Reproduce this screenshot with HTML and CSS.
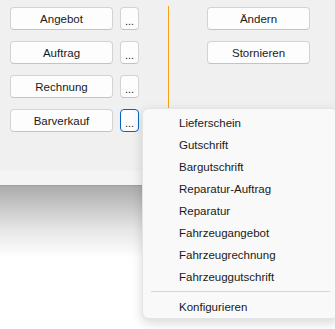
FILE: index.html
```html
<!DOCTYPE html>
<html lang="de">
<head>
    <meta charset="UTF-8">
    <meta name="viewport" content="width=device-width, initial-scale=1.0">
    <title>Belege</title>
    <link rel="stylesheet" href="styles.css">
</head>
<body>

<div class="panel">
    <div class="col-left">
        <div class="row">
            <button class="btn">Angebot</button>
            <button class="btn-more">...</button>
        </div>
        <div class="row">
            <button class="btn">Auftrag</button>
            <button class="btn-more">...</button>
        </div>
        <div class="row">
            <button class="btn">Rechnung</button>
            <button class="btn-more">...</button>
        </div>
        <div class="row">
            <button class="btn">Barverkauf</button>
            <button class="btn-more active">...</button>
        </div>
    </div>
    <div class="divider"></div>
    <div class="col-right">
        <button class="btn">Ändern</button>
        <button class="btn">Stornieren</button>
    </div>
</div>
<div class="band"></div>
<div class="fade"></div>

<!-- Kontextmenü von "..." bei Barverkauf -->
<div class="menu">
    <a href="#">Lieferschein</a>
    <a href="#">Gutschrift</a>
    <a href="#">Bargutschrift</a>
    <a href="#">Reparatur-Auftrag</a>
    <a href="#">Reparatur</a>
    <a href="#">Fahrzeugangebot</a>
    <a href="#">Fahrzeugrechnung</a>
    <a href="#">Fahrzeuggutschrift</a>
    <div class="sep"></div>
    <a href="#">Konfigurieren</a>
</div>

</body>
</html>
```

FILE: styles.css
```css
body {
    font-family: 'Segoe UI', 'Liberation Sans', Arial, sans-serif;
    font-size: 11.5px;
    margin: 0;
    padding: 0;
    background-color: #fff;
    color: #1a1a1a;
    overflow: hidden;
}
.panel {
    display: flex;
    align-items: flex-start;
    height: 171px;
    box-sizing: border-box;
    padding: 7px 0 0 10px;
    background-color: #f0f0f0;
}
.col-left {
    display: flex;
    flex-direction: column;
    gap: 11px;
}
.row {
    display: flex;
    gap: 7px;
}
.btn,
.btn-more {
    font-family: inherit;
    font-size: 11.5px;
    color: #1a1a1a;
    height: 23px;
    padding: 0;
    background-color: #fdfdfd;
    border: 1px solid #d3d3d3;
    border-bottom-color: #c4c4c4;
    border-radius: 4px;
    cursor: pointer;
}
.btn {
    width: 103px;
}
.btn-more {
    width: 19px;
    line-height: 26px;
    font-size: 11px;
}
.btn-more.active {
    border-color: #0067c0;
}
.divider {
    width: 1px;
    height: 150px;
    margin: -1px 38px 0 29px;
    background-color: #f7a21b;
}
.col-right {
    display: flex;
    flex-direction: column;
    gap: 11px;
}
.band {
    height: 14px;
    background-color: #f4f4f4;
}
.fade {
    height: 72px;
    border-top: 1px solid #9e9e9e;
    background: linear-gradient(#ababab, #e6e6e6 60%, #fff);
}
/* Kontextmenü */
.menu {
    position: absolute;
    top: 108px;
    left: 142px;
    width: 195px;
    padding: 3px 0 0;
    background-color: #f9f9f9;
    border: 1px solid #e4e4e4;
    border-radius: 7px;
    box-shadow: 0 4px 12px rgba(0, 0, 0, 0.16);
    display: flex;
    flex-direction: column;
}
.menu a {
    display: block;
    height: 22px;
    line-height: 22px;
    padding-left: 36px;
    color: #1a1a1a;
    text-decoration: none;
}
.menu .sep {
    height: 1px;
    margin: 3px 8px 4px;
    background-color: #d6d6d6;
}
```
